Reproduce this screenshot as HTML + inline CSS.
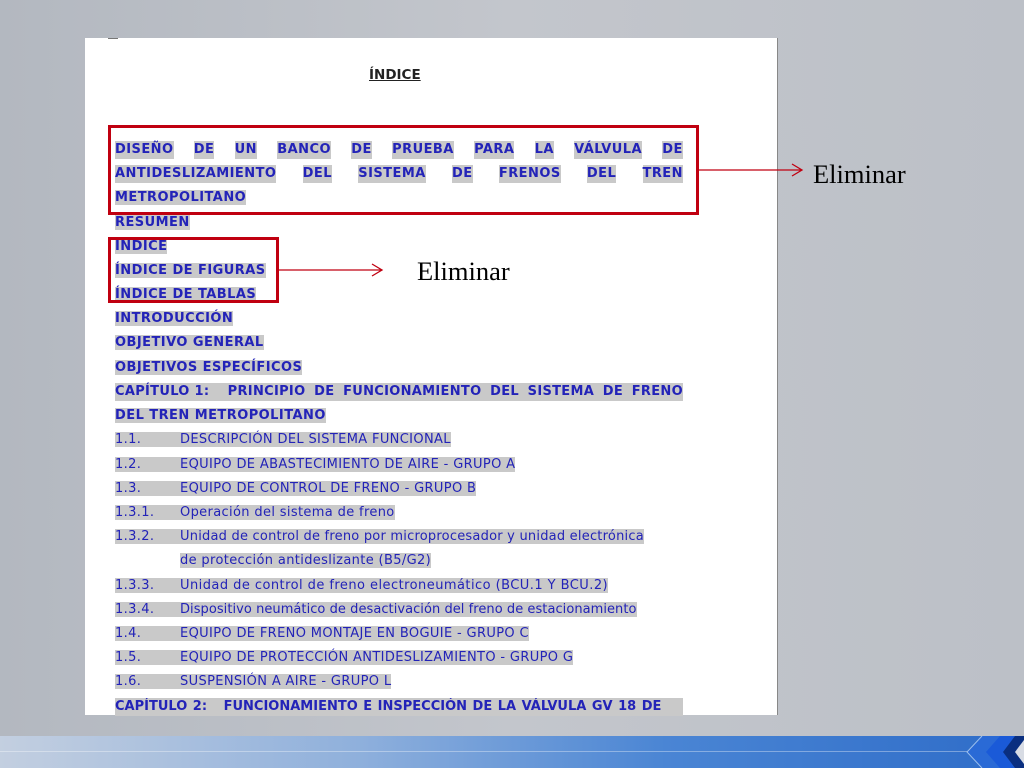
<!DOCTYPE html>
<html><head><meta charset="utf-8"><style>
body{margin:0;width:1024px;height:768px;overflow:hidden;background:#b9bdc5;position:relative;font-family:"DejaVu Sans",sans-serif}
.page{position:absolute;left:85px;top:38px;width:692px;height:677px;background:#fff;border-right:1px solid #888}
.l{position:absolute;left:115px;height:18px;line-height:18px;color:#2323b8;white-space:nowrap}
.b{font-weight:bold;font-size:13px;letter-spacing:0.45px}
.n{font-family:"DejaVu Sans",sans-serif;font-size:13px;letter-spacing:0.35px}
.h{background:#c9c9c9}
.j{display:flex;justify-content:space-between;width:568px}
.num{display:inline-block;width:65px}
.box{position:absolute;border:3px solid #c00010;box-sizing:border-box}
.elim{position:absolute;font-family:"Liberation Serif",serif;font-size:26.5px;color:#000}
</style></head><body>
<div style="position:absolute;left:0;top:0;width:1024px;height:736px;background:linear-gradient(90deg,#b3b8c0,#c3c6cc 50%,#bcc0c7)"></div>
<div class="page"></div>
<div style="position:absolute;left:108px;top:38px;width:10px;height:1px;background:#777"></div>
<div style="position:absolute;left:369px;top:67px;font-weight:bold;font-size:13.5px;color:#222;text-decoration:underline">ÍNDICE</div>

<div class="l b j" style="top:141px"><span class="h">DISEÑO</span><span class="h">DE</span><span class="h">UN</span><span class="h">BANCO</span><span class="h">DE</span><span class="h">PRUEBA</span><span class="h">PARA</span><span class="h">LA</span><span class="h">VÁLVULA</span><span class="h">DE</span></div>
<div class="l b j" style="top:165px"><span class="h">ANTIDESLIZAMIENTO</span><span class="h">DEL</span><span class="h">SISTEMA</span><span class="h">DE</span><span class="h">FRENOS</span><span class="h">DEL</span><span class="h">TREN</span></div>
<div class="l b" style="top:189px"><span class="h">METROPOLITANO</span></div>
<div class="l b" style="top:214px"><span class="h">RESUMEN</span></div>
<div class="l b" style="top:238px"><span class="h">ÍNDICE</span></div>
<div class="l b" style="top:262px"><span class="h">ÍNDICE DE FIGURAS</span></div>
<div class="l b" style="top:286px"><span class="h">ÍNDICE DE TABLAS</span></div>
<div class="l b" style="top:310px"><span class="h">INTRODUCCIÓN</span></div>
<div class="l b" style="top:334px"><span class="h">OBJETIVO GENERAL</span></div>
<div class="l b" style="top:359px"><span class="h">OBJETIVOS ESPECÍFICOS</span></div>
<div class="l b j h" style="top:383px;letter-spacing:0.3px"><span>CAPÍTULO 1:&nbsp;&nbsp;</span><span>PRINCIPIO</span><span>DE</span><span>FUNCIONAMIENTO</span><span>DEL</span><span>SISTEMA</span><span>DE</span><span>FRENO</span></div>
<div class="l b" style="top:407px"><span class="h">DEL TREN METROPOLITANO</span></div>
<div class="l n" style="top:431px"><span class="h"><span class="num">1.1.</span>DESCRIPCIÓN DEL SISTEMA FUNCIONAL</span></div>
<div class="l n" style="top:456px"><span class="h"><span class="num">1.2.</span>EQUIPO DE ABASTECIMIENTO DE AIRE - GRUPO A</span></div>
<div class="l n" style="top:480px"><span class="h"><span class="num">1.3.</span>EQUIPO DE CONTROL DE FRENO - GRUPO B</span></div>
<div class="l n" style="top:504px"><span class="h"><span class="num">1.3.1.</span>Operación del sistema de freno</span></div>
<div class="l n" style="top:528px"><span class="h"><span class="num">1.3.2.</span><span style="letter-spacing:0.22px">Unidad de control de freno por microprocesador y unidad electrónica</span></span></div>
<div class="l n" style="top:552px;left:180px"><span class="h">de protección antideslizante (B5/G2)</span></div>
<div class="l n" style="top:577px"><span class="h"><span class="num">1.3.3.</span><span style="letter-spacing:0.45px">Unidad de control de freno electroneumático (BCU.1 Y BCU.2)</span></span></div>
<div class="l n" style="top:601px"><span class="h"><span class="num">1.3.4.</span><span style="letter-spacing:0.05px">Dispositivo neumático de desactivación del freno de estacionamiento</span></span></div>
<div class="l n" style="top:625px"><span class="h"><span class="num">1.4.</span>EQUIPO DE FRENO MONTAJE EN BOGUIE - GRUPO C</span></div>
<div class="l n" style="top:649px"><span class="h"><span class="num">1.5.</span>EQUIPO DE PROTECCIÓN ANTIDESLIZAMIENTO - GRUPO G</span></div>
<div class="l n" style="top:673px"><span class="h"><span class="num">1.6.</span>SUSPENSIÓN A AIRE - GRUPO L</span></div>
<div class="l b" style="top:698px;width:568px;overflow:hidden;letter-spacing:0"><span class="h" style="display:inline-block;width:568px;word-spacing:1px">CAPÍTULO 2:&nbsp;&nbsp; FUNCIONAMIENTO E INSPECCIÓN DE LA VÁLVULA GV 18 DE</span></div>

<div class="box" style="left:108px;top:125px;width:591px;height:90px"></div>
<div class="box" style="left:108px;top:237px;width:171px;height:66px"></div>
<svg style="position:absolute;left:0;top:0" width="1024" height="768">
<path d="M698 170H802M792 164L802 170L792 176" stroke="#c00010" stroke-width="1.3" fill="none"/>
<path d="M279 270H382M372 264L382 270L372 276" stroke="#c00010" stroke-width="1.3" fill="none"/>
</svg>
<div class="elim" style="left:813px;top:159px">Eliminar</div>
<div class="elim" style="left:417px;top:256px">Eliminar</div>

<div style="position:absolute;left:0;top:736px;width:1024px;height:32px;background:linear-gradient(90deg,#c3cfe0,#8fb0dc 35%,#4a85d4 65%,#2e6cc8)"></div>
<div style="position:absolute;left:0;top:751px;width:970px;height:1px;background:rgba(255,255,255,.35)"></div>
<svg style="position:absolute;left:960px;top:736px" width="64" height="32">
<polygon points="22,0 64,0 64,32 22,32 7,16" fill="#2a6ad6"/>
<polygon points="40,0 64,0 64,32 40,32 26,16" fill="#1a5ad8"/>
<polygon points="55,0 64,0 64,32 55,32 43,16" fill="#0a2f80"/>
<polygon points="64,4 64,28 55,16" fill="#d8dce4"/>
<path d="M22,0 L7,16 L22,32" stroke="#9cc0ee" fill="none" stroke-width="1"/>
</svg>
</body></html>
